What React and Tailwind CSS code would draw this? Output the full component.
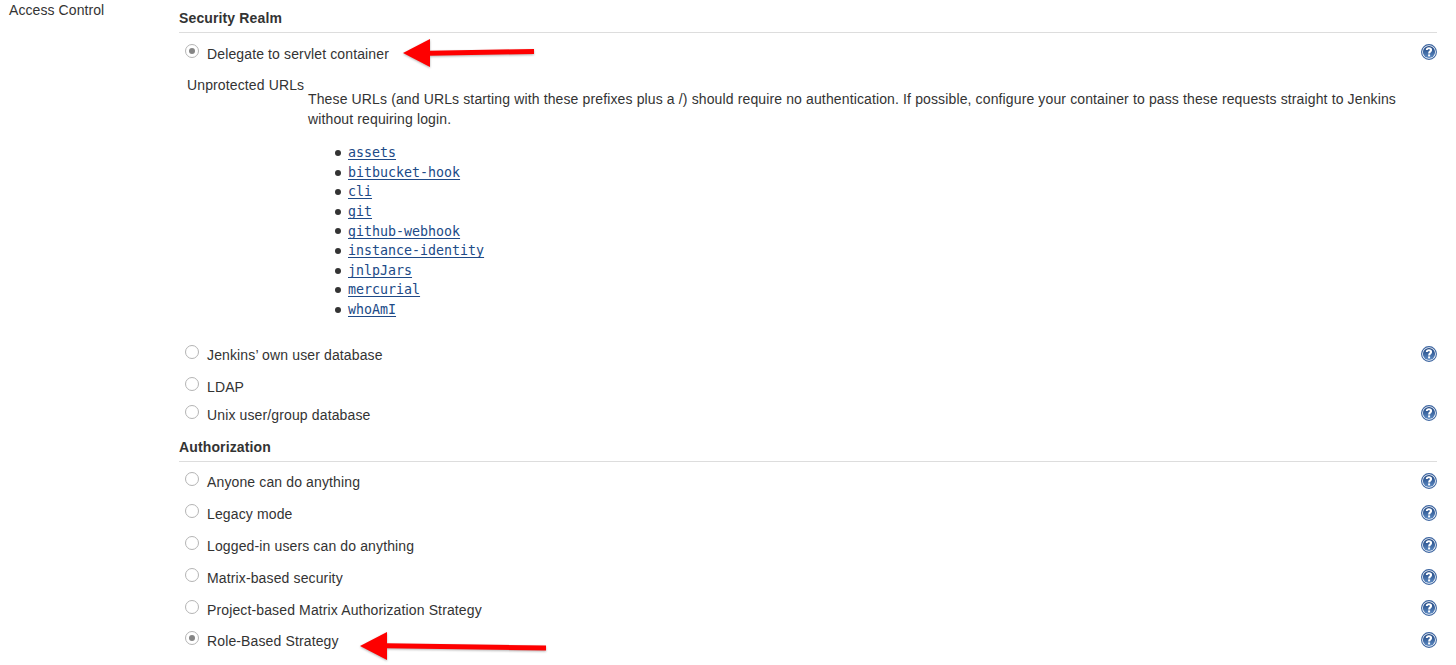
function HelpIcon() {
  return (
    <svg viewBox="0 0 16 16" className="block size-4 shrink-0" aria-label="Help">
      <defs>
        <linearGradient id="help" x1="0" y1="0" x2="0" y2="1">
          <stop offset="0" stopColor="#1d4480" />
          <stop offset="1" stopColor="#5f8cc4" />
        </linearGradient>
      </defs>
      <circle cx="8" cy="8" r="7.4" fill="#fff" stroke="#3b64a0" strokeWidth="1.1" />
      <circle cx="8" cy="8" r="6.1" fill="url(#help)" />
      <path d="M5.8 5.9C5.8 3.5 10.1 3.6 10.1 5.9C10.1 7.4 8.1 7.4 8.1 9.4" fill="none" stroke="#fff" strokeWidth="2" />
      <rect x="7.1" y="10.4" width="2" height="2" fill="#fff" />
    </svg>
  );
}

function Arrow({ className, width, head, shaft }) {
  return (
    <svg
      width={width}
      height="30"
      viewBox={`0 0 ${width} 30`}
      className={`absolute overflow-visible drop-shadow-[0_1px_1px_rgba(0,0,0,0.3)] ${className}`}
    >
      <polygon points={head} fill="#fe0000" />
      <polygon points={shaft} fill="#fe0000" />
    </svg>
  );
}

function Option({ label, checked, help = true, height = "h-8", iconTop = "mt-[7px]", children }) {
  return (
    <div className={`relative flex items-start pl-1.5 ${height}`}>
      <span className="mt-1.5 flex size-3.5 shrink-0 items-center justify-center rounded-full border border-[#b4b4b4] bg-white">
        {checked && <span className="size-1.5 rounded-full bg-[#858585]" />}
      </span>
      <span className="ml-2 mt-1.5 grow">{label}</span>
      {help && <span className={iconTop}><HelpIcon /></span>}
      {children}
    </div>
  );
}

function Heading({ className, children }) {
  return <h2 className={`h-[25px] border-b border-[#dddddd] font-bold ${className}`}>{children}</h2>;
}

const urls = ["assets", "bitbucket-hook", "cli", "git", "github-webhook", "instance-identity", "jnlpJars", "mercurial", "whoAmI"];

export default function App() {
  return (
    <div className="flex h-[665px] overflow-hidden bg-white pl-[9px] pr-[19px] font-['Liberation_Sans',Arial,sans-serif] text-[14px] leading-5 tracking-[0.13px] text-[#333333]">
      <div className="w-[170px] shrink-0 tracking-[0.08px]">Access Control</div>
      <main className="grow pt-2">
        <section>
          <Heading className="mb-[5px]">Security Realm</Heading>
          <Option label="Delegate to servlet container" checked iconTop="mt-1.5">
            <Arrow className="left-[224px] top-0" width={134} head="0,15 27,1 27,29" shaft="26,12.7 131,11 131,16 26,17.7" />
          </Option>
          <div className="flex h-[269px] items-start pl-2">
            <div className="w-[121px] shrink-0 pt-[5px]">Unprotected URLs</div>
            <div className="grow pt-[19px]">
              <p>
                These URLs (and URLs starting with these prefixes plus a /) should require no authentication. If possible, configure your container to pass these requests straight to Jenkins without requiring login.
              </p>
              <ul className="pl-[27px] pt-[14.3px] leading-[19.6px] tracking-normal">
                {urls.map((u) => (
                  <li key={u} className="flex h-[19.6px] items-center">
                    <span className="mr-[7px] size-1.5 rounded-full bg-[#333333]" />
                    <a className="font-['DejaVu_Sans_Mono',monospace] text-[13.3px] text-[#204a87] underline decoration-1 underline-offset-2 [text-decoration-skip-ink:none]">{u}</a>
                  </li>
                ))}
              </ul>
            </div>
          </div>
          <Option label="Jenkins’ own user database" />
          <Option label="LDAP" help={false} height="h-7" />
          <Option label="Unix user/group database" height="h-[38px]" iconTop="mt-1.5" />
        </section>
        <section>
          <Heading className="mb-1">Authorization</Heading>
          <Option label="Anyone can do anything" />
          <Option label="Legacy mode" />
          <Option label="Logged-in users can do anything" />
          <Option label="Matrix-based security" />
          <Option label="Project-based Matrix Authorization Strategy" height="h-[31px]" iconTop="mt-1.5" />
          <Option label="Role-Based Strategy" checked>
            <Arrow className="left-[181px] top-[6px]" width={188} head="0,15 27,1 27,29" shaft="26,12.3 186,14.5 186,19.5 26,17.3" />
          </Option>
        </section>
      </main>
    </div>
  );
}
